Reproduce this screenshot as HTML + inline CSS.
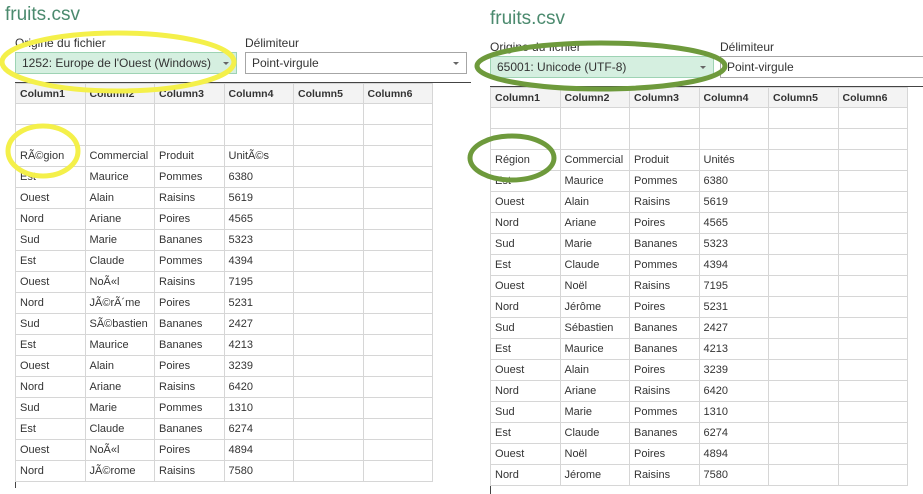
<!DOCTYPE html>
<html><head><meta charset="utf-8"><style>
body{margin:0;width:923px;height:494px;background:#fff;position:relative;overflow:hidden;font-family:"Liberation Sans",sans-serif;color:#333}
.p{position:absolute}
.t{font-size:19px;color:#4b8a6e}
.l{font-size:12px;color:#333}
.dd{position:absolute;border:1px solid #a6a6a6;font-size:12px;line-height:20px;padding-left:6px;box-sizing:border-box;height:22px}
.dd.g{background:#d5efe0;border-color:#9ed3b4}
.arr{position:absolute;right:7px;top:9px;width:0;height:0;border-left:3px solid transparent;border-right:3px solid transparent;border-top:3px solid #666}
table{position:absolute;border-collapse:collapse;table-layout:fixed;font-size:11px}
td{border:1px solid #d6d6d6;height:20px;padding:0 0 0 4px;width:64.5px;white-space:nowrap;overflow:hidden;color:#333}
tr.h td{background:#f3f3f3;font-weight:bold;font-size:10.5px;height:19px}
.tl{position:absolute;background:#444}
</style></head><body>
<div class="p t" style="left:5px;top:4px">fruits.csv</div>
<div class="p l" style="left:15px;top:36px">Origine du fichier</div>
<div class="p l" style="left:245px;top:36px">Délimiteur</div>
<div class="dd g" style="left:15px;top:52px;width:222px">1252: Europe de l'Ouest (Windows)<span class="arr"></span></div>
<div class="dd" style="left:245px;top:52px;width:222px">Point-virgule<span class="arr"></span></div>
<div class="tl" style="left:15px;top:82px;width:456px;height:1px"></div>
<div class="tl" style="left:15px;top:82px;width:1px;height:406px"></div>
<table style="left:15px;top:83px">
<tr class="h"><td>Column1</td><td>Column2</td><td>Column3</td><td>Column4</td><td>Column5</td><td>Column6</td></tr>
<tr><td></td><td></td><td></td><td></td><td></td><td></td></tr>
<tr><td></td><td></td><td></td><td></td><td></td><td></td></tr>
<tr><td>RÃ©gion</td><td>Commercial</td><td>Produit</td><td>UnitÃ©s</td><td></td><td></td></tr>
<tr><td>Est</td><td>Maurice</td><td>Pommes</td><td>6380</td><td></td><td></td></tr>
<tr><td>Ouest</td><td>Alain</td><td>Raisins</td><td>5619</td><td></td><td></td></tr>
<tr><td>Nord</td><td>Ariane</td><td>Poires</td><td>4565</td><td></td><td></td></tr>
<tr><td>Sud</td><td>Marie</td><td>Bananes</td><td>5323</td><td></td><td></td></tr>
<tr><td>Est</td><td>Claude</td><td>Pommes</td><td>4394</td><td></td><td></td></tr>
<tr><td>Ouest</td><td>NoÃ«l</td><td>Raisins</td><td>7195</td><td></td><td></td></tr>
<tr><td>Nord</td><td>JÃ©rÃ´me</td><td>Poires</td><td>5231</td><td></td><td></td></tr>
<tr><td>Sud</td><td>SÃ©bastien</td><td>Bananes</td><td>2427</td><td></td><td></td></tr>
<tr><td>Est</td><td>Maurice</td><td>Bananes</td><td>4213</td><td></td><td></td></tr>
<tr><td>Ouest</td><td>Alain</td><td>Poires</td><td>3239</td><td></td><td></td></tr>
<tr><td>Nord</td><td>Ariane</td><td>Raisins</td><td>6420</td><td></td><td></td></tr>
<tr><td>Sud</td><td>Marie</td><td>Pommes</td><td>1310</td><td></td><td></td></tr>
<tr><td>Est</td><td>Claude</td><td>Bananes</td><td>6274</td><td></td><td></td></tr>
<tr><td>Ouest</td><td>NoÃ«l</td><td>Poires</td><td>4894</td><td></td><td></td></tr>
<tr><td>Nord</td><td>JÃ©rome</td><td>Raisins</td><td>7580</td><td></td><td></td></tr>
</table>

<div class="p t" style="left:490px;top:8px">fruits.csv</div>
<div class="p l" style="left:490px;top:40px">Origine du fichier</div>
<div class="p l" style="left:720px;top:40px">Délimiteur</div>
<div class="dd g" style="left:490px;top:56px;width:224px">65001: Unicode (UTF-8)<span class="arr"></span></div>
<div class="dd" style="left:720px;top:56px;width:210px">Point-virgule</div>
<div class="tl" style="left:490px;top:86px;width:433px;height:1px"></div>
<div class="tl" style="left:490px;top:86px;width:1px;height:408px"></div>
<table style="left:490px;top:87px">
<tr class="h"><td>Column1</td><td>Column2</td><td>Column3</td><td>Column4</td><td>Column5</td><td>Column6</td></tr>
<tr><td></td><td></td><td></td><td></td><td></td><td></td></tr>
<tr><td></td><td></td><td></td><td></td><td></td><td></td></tr>
<tr><td>Région</td><td>Commercial</td><td>Produit</td><td>Unités</td><td></td><td></td></tr>
<tr><td>Est</td><td>Maurice</td><td>Pommes</td><td>6380</td><td></td><td></td></tr>
<tr><td>Ouest</td><td>Alain</td><td>Raisins</td><td>5619</td><td></td><td></td></tr>
<tr><td>Nord</td><td>Ariane</td><td>Poires</td><td>4565</td><td></td><td></td></tr>
<tr><td>Sud</td><td>Marie</td><td>Bananes</td><td>5323</td><td></td><td></td></tr>
<tr><td>Est</td><td>Claude</td><td>Pommes</td><td>4394</td><td></td><td></td></tr>
<tr><td>Ouest</td><td>Noël</td><td>Raisins</td><td>7195</td><td></td><td></td></tr>
<tr><td>Nord</td><td>Jérôme</td><td>Poires</td><td>5231</td><td></td><td></td></tr>
<tr><td>Sud</td><td>Sébastien</td><td>Bananes</td><td>2427</td><td></td><td></td></tr>
<tr><td>Est</td><td>Maurice</td><td>Bananes</td><td>4213</td><td></td><td></td></tr>
<tr><td>Ouest</td><td>Alain</td><td>Poires</td><td>3239</td><td></td><td></td></tr>
<tr><td>Nord</td><td>Ariane</td><td>Raisins</td><td>6420</td><td></td><td></td></tr>
<tr><td>Sud</td><td>Marie</td><td>Pommes</td><td>1310</td><td></td><td></td></tr>
<tr><td>Est</td><td>Claude</td><td>Bananes</td><td>6274</td><td></td><td></td></tr>
<tr><td>Ouest</td><td>Noël</td><td>Poires</td><td>4894</td><td></td><td></td></tr>
<tr><td>Nord</td><td>Jérome</td><td>Raisins</td><td>7580</td><td></td><td></td></tr>
</table>

<svg class="p" style="left:0;top:0" width="923" height="494">
<ellipse cx="118" cy="62" rx="116" ry="29" fill="none" stroke="#f4f04a" stroke-width="5"/>
<ellipse cx="43" cy="151" rx="35" ry="25" fill="none" stroke="#f4f04a" stroke-width="5"/>
<ellipse cx="601" cy="66" rx="124" ry="23" fill="none" stroke="#6e9a3c" stroke-width="5"/>
<ellipse cx="512" cy="158" rx="42" ry="22" fill="none" stroke="#6e9a3c" stroke-width="5"/>
</svg>
</body></html>
